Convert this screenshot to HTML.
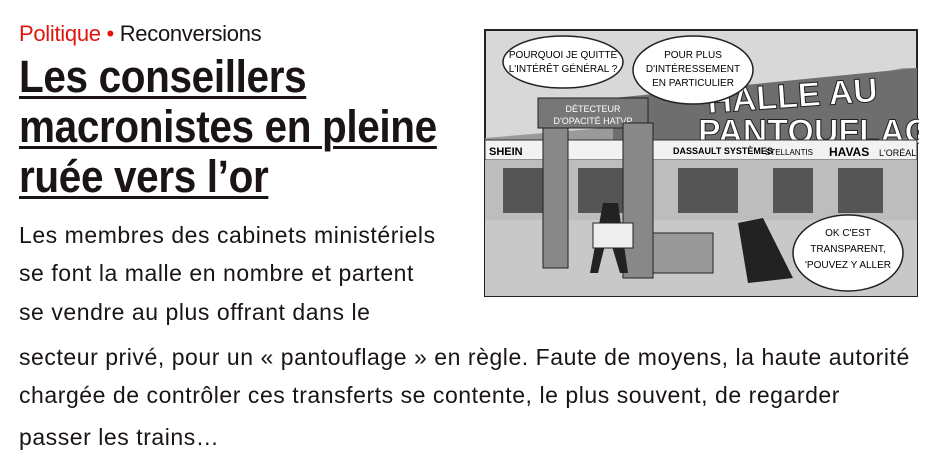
<!DOCTYPE html>
<html><head><meta charset="utf-8"><style>
html,body{margin:0;padding:0;background:#fff;width:942px;height:460px;overflow:hidden}
body{font-family:"Liberation Sans",sans-serif;color:#1a1414;position:relative}
.cat{position:absolute;left:19px;top:21px;font-size:22px;letter-spacing:-0.3px}
.cat .r{color:#e2140e}
h1{position:absolute;left:19px;top:52px;margin:0;font-size:45px;line-height:50px;font-weight:bold;letter-spacing:-0.4px;transform:scaleX(0.9);transform-origin:0 0;white-space:nowrap}
h1 span{text-decoration:underline;text-decoration-thickness:3px;text-underline-offset:4px}
.l{position:absolute;left:19px;font-size:23px;line-height:40px;white-space:nowrap;letter-spacing:0.55px}
.pic{position:absolute;left:483px;top:28px;width:436px;height:270px}
</style></head><body>
<div class="cat"><span class="r">Politique •</span> Reconversions</div>
<h1><span>Les conseillers</span><br><span>macronistes en pleine</span><br><span>ruée vers l’or</span></h1>
<div class="l" style="top:215px">Les membres des cabinets ministériels</div>
<div class="l" style="top:253px">se font la malle en nombre et partent</div>
<div class="l" style="top:292px">se vendre au plus offrant dans le</div>
<div class="l" style="top:337px">secteur privé, pour un « pantouflage » en règle. Faute de moyens, la haute autorité</div>
<div class="l" style="top:375px">chargée de contrôler ces transferts se contente, le plus souvent, de regarder</div>
<div class="l" style="top:417px">passer les trains…</div>
<svg class="pic" viewBox="0 0 436 270" font-family="Liberation Sans,sans-serif">
<rect x="0" y="0" width="436" height="270" fill="#fff"/>
<rect x="2" y="2" width="432" height="266" fill="#d8d8d8" stroke="#222" stroke-width="2"/>
<polygon points="2,110 120,100 420,40 434,40 434,180 2,190" fill="#9a9a9a"/>
<polygon points="130,70 434,40 434,110 130,120" fill="#6e6e6e"/>
<text x="225" y="80" font-size="34" font-weight="bold" fill="#fff" stroke="#222" stroke-width="1" transform="rotate(-4 300 80)">HALLE AU</text>
<text x="215" y="115" font-size="34" font-weight="bold" fill="#fff" stroke="#222" stroke-width="1">PANTOUFLAGE</text>
<rect x="2" y="112" width="432" height="20" fill="#f2f2f2" stroke="#333"/>
<text x="6" y="127" font-size="11" font-weight="bold">SHEIN</text>
<text x="190" y="126" font-size="9" font-weight="bold">DASSAULT SYSTÈMES</text>
<text x="282" y="127" font-size="8">STELLANTIS</text>
<text x="346" y="128" font-size="12" font-weight="bold">HAVAS</text>
<text x="396" y="128" font-size="9">L'ORÉAL</text>
<rect x="2" y="132" width="432" height="60" fill="#bdbdbd"/>
<g fill="#555"><rect x="20" y="140" width="40" height="45"/><rect x="95" y="140" width="55" height="45"/><rect x="195" y="140" width="60" height="45"/><rect x="290" y="140" width="40" height="45"/><rect x="355" y="140" width="45" height="45"/></g>
<rect x="2" y="192" width="432" height="76" fill="#c8c8c8"/>
<rect x="55" y="70" width="110" height="30" fill="#777" stroke="#222"/>
<text x="110" y="84" font-size="9" fill="#fff" text-anchor="middle">DÉTECTEUR</text>
<text x="110" y="96" font-size="9" fill="#fff" text-anchor="middle">D'OPACITÉ HATVP</text>
<rect x="60" y="100" width="25" height="140" fill="#888" stroke="#222"/>
<rect x="140" y="95" width="30" height="155" fill="#888" stroke="#222"/>
<rect x="170" y="205" width="60" height="40" fill="#999" stroke="#222"/>
<path d="M120 175 l15 0 l10 70 l-8 0 l-12-40 l-10 40 l-8 0 z" fill="#222"/>
<rect x="110" y="195" width="40" height="25" fill="#eee" stroke="#222"/>
<path d="M255 195 l25 -5 l30 60 l-45 5 z" fill="#222"/>
<ellipse cx="80" cy="34" rx="60" ry="26" fill="#fff" stroke="#222" stroke-width="1.5"/>
<text x="80" y="30" font-size="10" text-anchor="middle">POURQUOI JE QUITTE</text>
<text x="80" y="44" font-size="10" text-anchor="middle">L'INTÉRÊT GÉNÉRAL ?</text>
<ellipse cx="210" cy="42" rx="60" ry="34" fill="#fff" stroke="#222" stroke-width="1.5"/>
<text x="210" y="30" font-size="10" text-anchor="middle">POUR PLUS</text>
<text x="210" y="44" font-size="10" text-anchor="middle">D'INTÉRESSEMENT</text>
<text x="210" y="58" font-size="10" text-anchor="middle">EN PARTICULIER</text>
<ellipse cx="365" cy="225" rx="55" ry="38" fill="#fff" stroke="#222" stroke-width="1.5"/>
<text x="365" y="208" font-size="10" text-anchor="middle">OK C'EST</text>
<text x="365" y="224" font-size="10" text-anchor="middle">TRANSPARENT,</text>
<text x="365" y="240" font-size="10" text-anchor="middle">'POUVEZ Y ALLER</text>
</svg>
</body></html>
